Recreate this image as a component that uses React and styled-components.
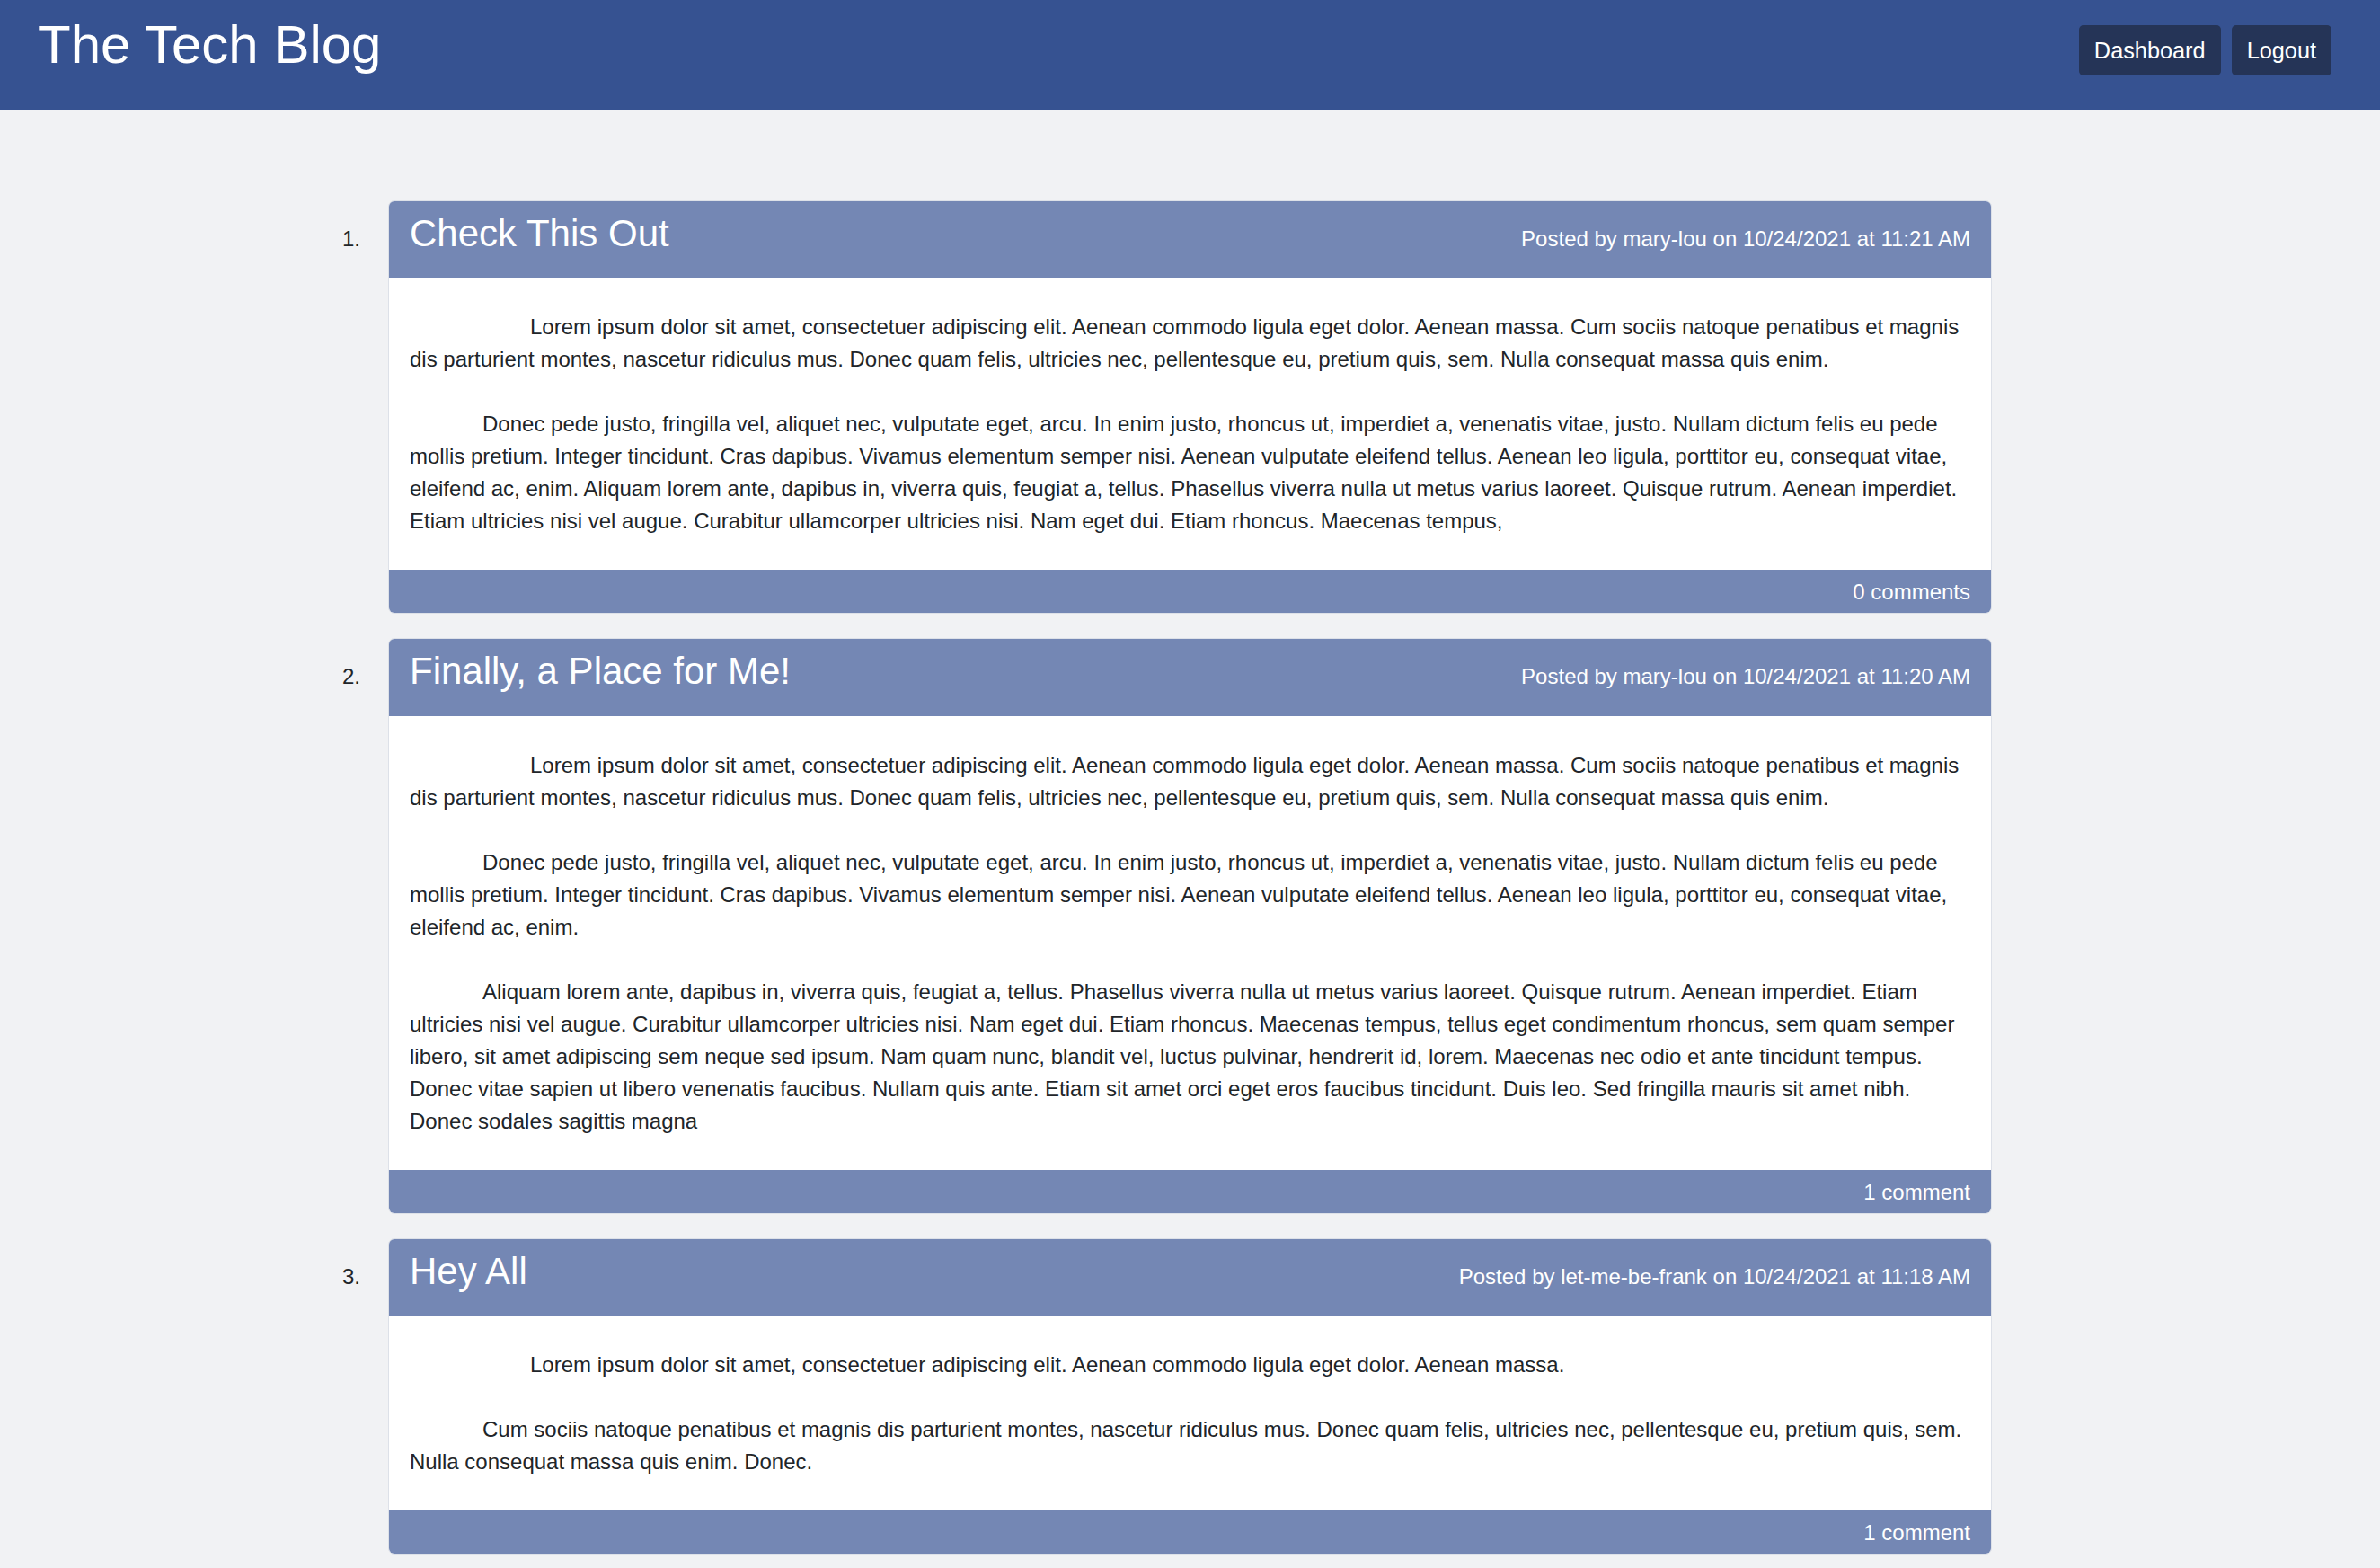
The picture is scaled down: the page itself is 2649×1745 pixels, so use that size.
import styled, { createGlobalStyle } from "styled-components";

const GlobalStyle = createGlobalStyle`
  * {
    box-sizing: border-box;
  }
  body {
    margin: 0;
    background-color: #f1f2f4;
    font-family: "Liberation Sans", Arial, sans-serif;
    color: #212529;
  }
`;

const Navbar = styled.header`
  height: 122px;
  background-color: #365291;
  display: flex;
  justify-content: space-between;
  align-items: flex-start;
  padding: 0 54px 0 42px;
`;

const Brand = styled.h1`
  margin: 14px 0 0;
  font-size: 60px;
  font-weight: 400;
  line-height: 1.2;
  color: #ffffff;
`;

const NavButtons = styled.nav`
  display: flex;
  gap: 12px;
  margin-top: 28px;
`;

const NavButton = styled.button`
  height: 56px;
  padding: 0 17px;
  border: none;
  border-radius: 5px;
  background-color: #253457;
  color: #ffffff;
  font-family: inherit;
  font-size: 25.3px;
  cursor: pointer;
  &:hover {
    background-color: #1c2844;
  }
`;

const Main = styled.main`
  padding: 101px 0 40px;
`;

const PostList = styled.ol`
  list-style: none;
  margin: 0;
  padding: 0;
  display: flex;
  flex-direction: column;
  gap: 27px;
`;

const PostItem = styled.li`
  display: grid;
  grid-template-columns: 1fr 1785px 1fr;
`;

const Number = styled.span`
  justify-self: end;
  align-self: start;
  margin: 25px 31px 0 0;
  font-size: 24px;
  line-height: 36px;
  color: #212529;
`;

const Card = styled.article`
  border: 1px solid #dde1e8;
  border-radius: 7px;
  overflow: hidden;
  background-color: #ffffff;
`;

const CardHeader = styled.div`
  display: flex;
  justify-content: space-between;
  align-items: baseline;
  padding: 11px 23px 24px;
  background-color: #7487b4;
  color: #ffffff;
`;

const Title = styled.h2`
  margin: 0;
  font-size: 42px;
  font-weight: 400;
  line-height: 1.2;
`;

const Meta = styled.span`
  font-size: 24px;
  line-height: 36px;
`;

const CardBody = styled.div`
  padding: 37px 23px 36px;
  font-size: 24px;
  line-height: 36px;
`;

const Paragraph = styled.p`
  margin: 0 0 36px;
  text-indent: 81px;
  &:first-child {
    text-indent: 134px;
  }
  &:last-child {
    margin-bottom: 0;
  }
`;

const CardFooter = styled.div`
  display: flex;
  justify-content: flex-end;
  padding: 7px 23px 5px;
  background-color: #7487b4;
  color: #ffffff;
  font-size: 24px;
  line-height: 36px;
`;

const lorem =
  "Lorem ipsum dolor sit amet, consectetuer adipiscing elit. Aenean commodo ligula eget dolor. Aenean massa. Cum sociis natoque penatibus et magnis dis parturient montes, nascetur ridiculus mus. Donec quam felis, ultricies nec, pellentesque eu, pretium quis, sem. Nulla consequat massa quis enim.";

const posts = [
  {
    id: 1,
    title: "Check This Out",
    author: "mary-lou",
    date: "10/24/2021 at 11:21 AM",
    comments: 0,
    paragraphs: [
      lorem,
      "Donec pede justo, fringilla vel, aliquet nec, vulputate eget, arcu. In enim justo, rhoncus ut, imperdiet a, venenatis vitae, justo. Nullam dictum felis eu pede mollis pretium. Integer tincidunt. Cras dapibus. Vivamus elementum semper nisi. Aenean vulputate eleifend tellus. Aenean leo ligula, porttitor eu, consequat vitae, eleifend ac, enim. Aliquam lorem ante, dapibus in, viverra quis, feugiat a, tellus. Phasellus viverra nulla ut metus varius laoreet. Quisque rutrum. Aenean imperdiet. Etiam ultricies nisi vel augue. Curabitur ullamcorper ultricies nisi. Nam eget dui. Etiam rhoncus. Maecenas tempus,",
    ],
  },
  {
    id: 2,
    title: "Finally, a Place for Me!",
    author: "mary-lou",
    date: "10/24/2021 at 11:20 AM",
    comments: 1,
    paragraphs: [
      lorem,
      "Donec pede justo, fringilla vel, aliquet nec, vulputate eget, arcu. In enim justo, rhoncus ut, imperdiet a, venenatis vitae, justo. Nullam dictum felis eu pede mollis pretium. Integer tincidunt. Cras dapibus. Vivamus elementum semper nisi. Aenean vulputate eleifend tellus. Aenean leo ligula, porttitor eu, consequat vitae, eleifend ac, enim.",
      "Aliquam lorem ante, dapibus in, viverra quis, feugiat a, tellus. Phasellus viverra nulla ut metus varius laoreet. Quisque rutrum. Aenean imperdiet. Etiam ultricies nisi vel augue. Curabitur ullamcorper ultricies nisi. Nam eget dui. Etiam rhoncus. Maecenas tempus, tellus eget condimentum rhoncus, sem quam semper libero, sit amet adipiscing sem neque sed ipsum. Nam quam nunc, blandit vel, luctus pulvinar, hendrerit id, lorem. Maecenas nec odio et ante tincidunt tempus. Donec vitae sapien ut libero venenatis faucibus. Nullam quis ante. Etiam sit amet orci eget eros faucibus tincidunt. Duis leo. Sed fringilla mauris sit amet nibh. Donec sodales sagittis magna",
    ],
  },
  {
    id: 3,
    title: "Hey All",
    author: "let-me-be-frank",
    date: "10/24/2021 at 11:18 AM",
    comments: 1,
    paragraphs: [
      "Lorem ipsum dolor sit amet, consectetuer adipiscing elit. Aenean commodo ligula eget dolor. Aenean massa.",
      "Cum sociis natoque penatibus et magnis dis parturient montes, nascetur ridiculus mus. Donec quam felis, ultricies nec, pellentesque eu, pretium quis, sem. Nulla consequat massa quis enim. Donec.",
    ],
  },
];

const App = () => {
  return (
    <>
      <GlobalStyle />
      <Navbar>
        <Brand>The Tech Blog</Brand>
        <NavButtons>
          <NavButton>Dashboard</NavButton>
          <NavButton>Logout</NavButton>
        </NavButtons>
      </Navbar>
      <Main>
        <PostList>
          {posts.map((post, i) => (
            <PostItem key={post.id}>
              <Number>{i + 1}.</Number>
              <Card>
                <CardHeader>
                  <Title>{post.title}</Title>
                  <Meta>
                    Posted by {post.author} on {post.date}
                  </Meta>
                </CardHeader>
                <CardBody>
                  {post.paragraphs.map((text, j) => (
                    <Paragraph key={j}>{text}</Paragraph>
                  ))}
                </CardBody>
                <CardFooter>
                  {post.comments} {post.comments === 1 ? "comment" : "comments"}
                </CardFooter>
              </Card>
            </PostItem>
          ))}
        </PostList>
      </Main>
    </>
  );
};

export default App;
